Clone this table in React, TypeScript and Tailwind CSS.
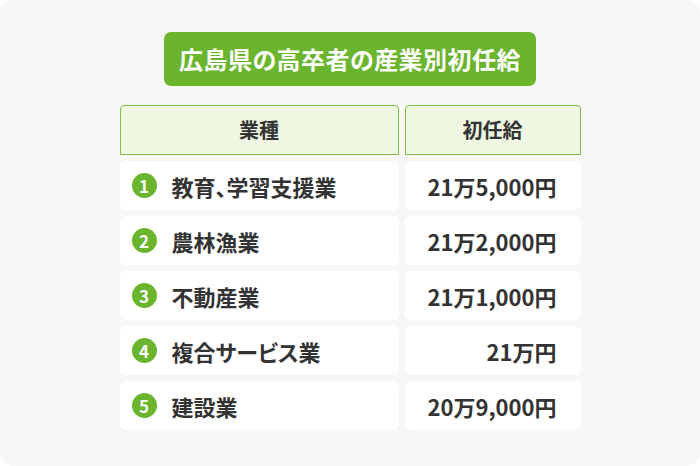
import React from "react";

const rows = [
  { n: 1, name: "教育、学習支援業", pay: "21万5,000円" },
  { n: 2, name: "農林漁業", pay: "21万2,000円" },
  { n: 3, name: "不動産業", pay: "21万1,000円" },
  { n: 4, name: "複合サービス業", pay: "21万円" },
  { n: 5, name: "建設業", pay: "20万9,000円" },
];

export default function App() {
  return (
    <div className="w-[700px] h-[466px] bg-white">
      <div
        className="w-[700px] h-[466px] bg-[#f7f7f7] rounded-[14px] flex flex-col items-center pt-[32px] text-[#333333] [font-feature-settings:'palt']"
        style={{ fontFamily: '"Noto Sans CJK JP", "Noto Sans", sans-serif' }}
      >
        <div className="w-[372px] h-[54px] bg-[#6ab42e] rounded-[7px] flex items-center justify-center text-white font-bold text-[24px] tracking-[0.02em] leading-none">
          広島県の高卒者の産業別初任給
        </div>
        <div className="mt-[19px] w-[461px] flex flex-col gap-[6px]">
          <div className="flex gap-[6px] h-[50px]">
            <div className="w-[279px] bg-[#eff7e3] border border-[#7fba45] rounded-t-[4px] flex items-center justify-center font-bold text-[20px]">
              業種
            </div>
            <div className="flex-1 bg-[#eff7e3] border border-[#7fba45] rounded-t-[4px] flex items-center justify-center font-bold text-[20px]">
              初任給
            </div>
          </div>
          {rows.map((r) => (
            <div key={r.n} className="flex gap-[6px] h-[49px]">
              <div className="w-[279px] bg-white rounded-[6px] flex items-center pl-[12px]">
                <div className="w-[25px] h-[25px] shrink-0 rounded-full bg-[#6ab42e] text-white flex items-center justify-center font-bold text-[17px] leading-none">
                  {r.n}
                </div>
                <div className="ml-[15px] font-bold text-[22px] leading-none">{r.name}</div>
              </div>
              <div className="flex-1 bg-white rounded-[6px] flex items-center justify-end pr-[24px] font-bold text-[22px] leading-none">
                {r.pay}
              </div>
            </div>
          ))}
        </div>
      </div>
    </div>
  );
}
